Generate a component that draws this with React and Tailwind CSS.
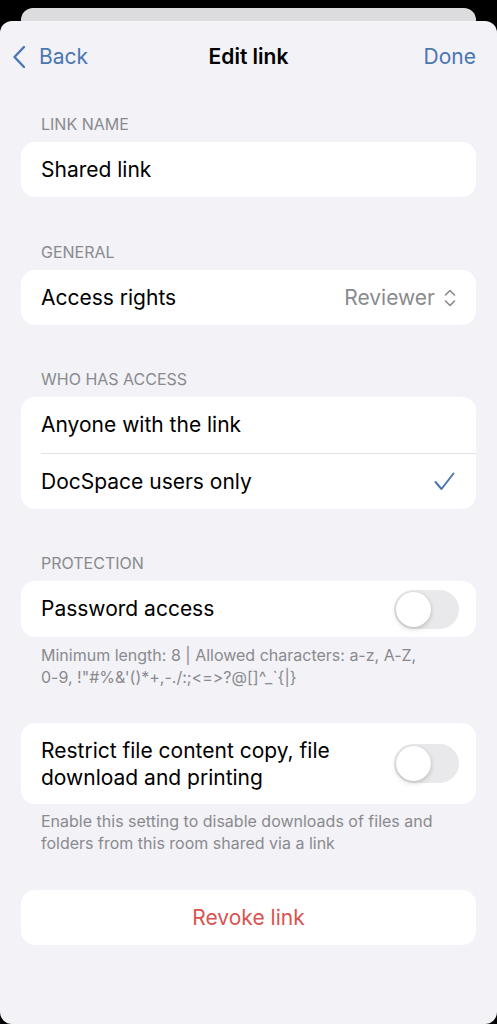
import React from "react";

const BLUE = "text-[#4a76b2]";

function SectionHeader({ children, className = "" }) {
  return (
    <div className={`px-[41px] h-[20px] leading-[20px] text-[16px] uppercase text-[#8a8a8e] mb-[8px] ${className}`}>
      {children}
    </div>
  );
}

function Card({ children, className = "" }) {
  return <div className={`mx-[21px] bg-white rounded-[14px] overflow-hidden ${className}`}>{children}</div>;
}

function Toggle() {
  return (
    <div className="w-[65px] h-[39px] rounded-full bg-[#e9e9eb] p-[2px] flex items-center">
      <div className="w-[35px] h-[35px] rounded-full bg-white shadow-[0_2px_5px_rgba(0,0,0,0.18),0_0_1px_rgba(0,0,0,0.15)]" />
    </div>
  );
}

function Footnote({ children, className = "" }) {
  return (
    <p className={`px-[41px] text-[16px] leading-[22px] text-[#8a8a8e] ${className}`}>{children}</p>
  );
}

export default function App() {
  return (
    <div
      className="w-[497px] h-[1024px] bg-black flex flex-col overflow-hidden text-black [font-feature-settings:'calt'_0,'liga'_0]"
      style={{ fontFamily: "Inter, 'Noto Sans', sans-serif" }}
    >
      {/* card stacked behind the sheet */}
      <div className="mx-[21px] mt-[8px] h-[13px] rounded-t-[12px] bg-[#dcdcde] shrink-0" />

      <div className="flex-1 bg-[#f2f2f7] rounded-[12px] flex flex-col">
        {/* Nav bar */}
        <div className="h-[72px] flex items-center justify-between px-[12px] relative">
          <button className={`flex items-center gap-[13px] ${BLUE} text-[21px]`}>
            <svg width="14" height="24" viewBox="0 0 14 24" fill="none">
              <path d="M12 2 L2.5 12 L12 22" stroke="currentColor" strokeWidth="2.4" strokeLinecap="round" strokeLinejoin="round" />
            </svg>
            <span>Back</span>
          </button>
          <div className="absolute left-0 right-0 text-center text-[21px] font-semibold pointer-events-none">
            Edit link
          </div>
          <button className={`${BLUE} text-[21px] pr-[9px]`}>Done</button>
        </div>

        {/* Link name */}
        <SectionHeader className="mt-[21px]">Link name</SectionHeader>
        <Card>
          <div className="h-[55px] flex items-center px-[20px] text-[21px]">Shared link</div>
        </Card>

        {/* General */}
        <SectionHeader className="mt-[45px]">General</SectionHeader>
        <Card>
          <div className="h-[55px] flex items-center justify-between pl-[20px] pr-[19px] text-[21px]">
            <span>Access rights</span>
            <span className="flex items-center gap-[8px] text-[#8a8a8e]">
              Reviewer
              <svg width="14" height="20" viewBox="0 0 14 20" fill="none">
                <path d="M2.5 7 L7 2.5 L11.5 7 M2.5 13 L7 17.5 L11.5 13" stroke="currentColor" strokeWidth="1.6" strokeLinecap="round" strokeLinejoin="round" />
              </svg>
            </span>
          </div>
        </Card>

        {/* Who has access */}
        <SectionHeader className="mt-[44px]">Who has access</SectionHeader>
        <Card>
          <div className="h-[56px] flex items-center px-[20px] text-[21px]">Anyone with the link</div>
          <div className="ml-[20px] h-px bg-[#e3e3e6]" />
          <div className="h-[55px] flex items-center justify-between pl-[20px] pr-[21px] text-[21px]">
            <span>DocSpace users only</span>
            <svg width="21" height="19" viewBox="0 0 21 19" fill="none" className={BLUE}>
              <path d="M1.5 10 L7.5 17 L19.5 1.5" stroke="currentColor" strokeWidth="2" strokeLinecap="round" strokeLinejoin="round" />
            </svg>
          </div>
        </Card>

        {/* Protection */}
        <SectionHeader className="mt-[44px]">Protection</SectionHeader>
        <Card>
          <div className="h-[56px] flex items-center justify-between pl-[20px] pr-[17px] text-[21px]">
            <span>Password access</span>
            <Toggle />
          </div>
        </Card>
        <Footnote className="mt-[7px]">
          Minimum length: 8 | Allowed characters: a-z, A-Z,
          <br />
          0-9, !"#%&amp;'()*+,-./:;&lt;=&gt;?@[]^_`{"{"}|{"}"}
        </Footnote>

        <Card className="mt-[35px]">
          <div className="h-[81px] flex items-center justify-between pl-[20px] pr-[17px]">
            <span className="text-[21px] leading-[27px]">
              Restrict file content copy, file
              <br />
              download and printing
            </span>
            <Toggle />
          </div>
        </Card>
        <Footnote className="mt-[6px]">
          Enable this setting to disable downloads of files and
          <br />
          folders from this room shared via a link
        </Footnote>

        <Card className="mt-[36px]">
          <button className="w-full h-[55px] flex items-center justify-center text-[21px] text-[#d9534f]">
            Revoke link
          </button>
        </Card>
      </div>
    </div>
  );
}
